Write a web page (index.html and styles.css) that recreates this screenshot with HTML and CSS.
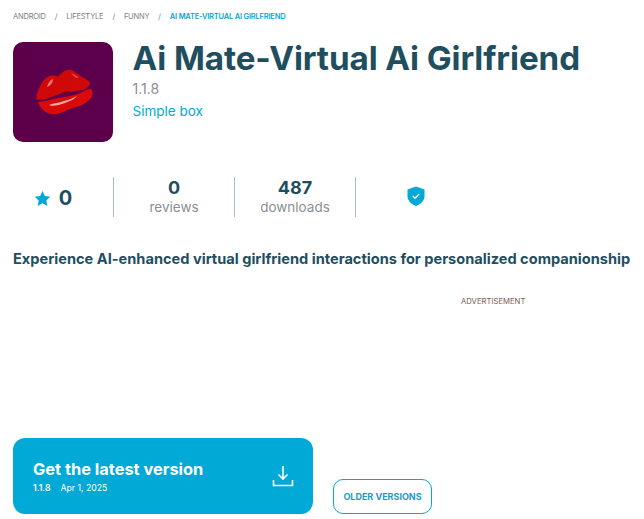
FILE: index.html
```html
<!DOCTYPE html>
<html lang="en">
<head>
  <meta charset="UTF-8" />
  <title>Ai Mate-Virtual Ai Girlfriend</title>
  <meta name="viewport" content="width=device-width, initial-scale=1" />
  <link rel="stylesheet" href="styles.css">
</head>
<body>
  <nav class="crumbs">
    <a>Android</a><span>/</span>
    <a>Lifestyle</a><span>/</span>
    <a>Funny</a><span>/</span>
    <a class="current">Ai Mate-Virtual Ai Girlfriend</a>
  </nav>

  <header class="app-head">
    <div class="app-icon">
      <svg width="100" height="100" viewBox="0 0 100 100">
        <path d="M23 57 C24 50 27 43 31 38 C34 34 40 32 45 35 C48 31 53 27 58 28 C62 29 66 33 69 35 C72 37 76 38 77 41 C76 45 73 47 70 48 C66 48 62 49 58 50 C54 49 50 50 47 52 C42 54 37 55 33 57 C30 58 26 58 23 57 Z" fill="#cf0808"/>
        <path d="M25 60 C32 60 38 57 45 56 C52 55 60 54 67 51 C71 49 75 47 78 47 C80 49 80 53 78 56 C75 60 71 62 67 64 C62 65 58 66 54 68 C49 71 43 73 38 72 C32 71 27 66 25 60 Z" fill="#d80a0a"/>
        <path d="M48 51.500 C51 49.500 54 49 57 50 C54 52 51 52.500 48 51.500 Z" fill="#7a0422"/>
        <path d="M34 45 C35 41 37 38 40 37 C40 41 37 44 34 45 Z" fill="#e97474"/>
        <path d="M36 63 C41 61 46 61 51 59 C56 58 60 56 64 54 C62 57 57 59 52 61 C46 63 40 65 36 63 Z" fill="#f3a6a6"/>
        <path d="M58 31 C62 32 64 34 66 36 C62 36 60 34 58 31 Z" fill="#e04040"/>
      </svg>
    </div>
    <div class="app-info">
      <h1>Ai Mate-Virtual Ai Girlfriend</h1>
      <div class="version">1.1.8</div>
      <a class="dev">Simple box</a>
    </div>
  </header>

  <section class="stats">
    <div class="stat rating">
      <svg width="17" height="17" viewBox="0 0 24 24"><path d="M12 1.500l3.300 7 7.700 1-5.600 5.300 1.400 7.700-6.800-3.700-6.800 3.700 1.400-7.700L1 9.500l7.700-1z" fill="#00a9d6"/></svg>
      <b>0</b>
    </div>
    <div class="stat"><b>0</b><span>reviews</span></div>
    <div class="stat"><b>487</b><span>downloads</span></div>
    <div class="stat safe">
      <svg width="18" height="20" viewBox="0 0 18 20">
        <path d="M9 0.500L17.500 3.500V10C17.500 14.500 14 18 9 20C4 18 .5 14.500 .5 10V3.500Z" fill="#00a9d6"/>
        <path d="M5.800 10L8 12.200L12.200 8" fill="none" stroke="#fff" stroke-width="1.400"/>
      </svg>
    </div>
  </section>

  <p class="tagline">Experience AI-enhanced virtual girlfriend interactions for personalized companionship</p>

  <div class="ad-label">ADVERTISEMENT</div>

  <div class="actions">
    <a class="get-btn">
      <div>
        <div class="get-title">Get the latest version</div>
        <div class="get-meta"><b>1.1.8</b><span>Apr 1, 2025</span></div>
      </div>
      <svg width="22" height="22" viewBox="0 0 22 22" fill="none" stroke="#fff" stroke-width="1.600">
        <path d="M11 1V14M6.500 9.500L11 14L15.500 9.500"/>
        <path d="M1.500 15V20.500H20.500V15"/>
      </svg>
    </a>
    <a class="older-btn">OLDER VERSIONS</a>
  </div>
</body>
</html>
```

FILE: styles.css
```css
body {
  margin: 0;
  padding: 0 0 0 13px;
  background: #fff;
  color: #1f4e5f;
  font-family: 'Inter', 'Liberation Sans', sans-serif;
  overflow: hidden;
}
.crumbs {
  display: flex;
  align-items: center;
  height: 32px;
  font-size: 7.5px;
  letter-spacing: -0.2px;
  text-transform: uppercase;
  color: #7a7f83;
}
.crumbs span {
  margin: 0 9px;
}
.crumbs .current {
  color: #00a9d6;
  font-weight: 600;
}
.app-head {
  display: flex;
  margin-top: 10px;
}
.app-icon {
  width: 100px;
  height: 100px;
  border-radius: 10px;
  background: #5c004c;
  overflow: hidden;
}
.app-info {
  margin-left: 19.5px;
}
h1 {
  margin: -2px 0 0;
  font-size: 33.2px;
  line-height: 36px;
  font-weight: 700;
  letter-spacing: -0.1px;
  white-space: nowrap;
}
.version {
  margin-top: 4px;
  font-size: 14px;
  line-height: 18px;
  color: #8a8f93;
}
.dev {
  display: block;
  margin-top: 4px;
  font-size: 13.5px;
  line-height: 18px;
  color: #00a9d6;
}
.stats {
  display: flex;
  align-items: center;
  margin-top: 35px;
  height: 40px;
}
.stat {
  width: 121px;
  height: 40px;
  display: flex;
  flex-direction: column;
  align-items: center;
  justify-content: center;
  border-right: 1px solid #a3bfca;
  box-sizing: border-box;
  font-size: 13.5px;
  color: #8a8f93;
}
.stat b {
  font-size: 18px;
  line-height: 20px;
  font-weight: 700;
  color: #1f4e5f;
}
.stat span {
  line-height: 19px;
}
.rating {
  width: 101px;
  padding: 2px 20px 0 0;
  flex-direction: row;
  gap: 8px;
}
.rating b {
  font-size: 20px;
}
.safe {
  padding: 0 2px 2px 0;
  border-right: 0;
}
.tagline {
  margin: 33px 0 0;
  font-size: 14.6px;
  line-height: 18px;
  font-weight: 700;
  white-space: nowrap;
}
.ad-label {
  margin: 28px 0 0 448px;
  font-size: 7.7px;
  line-height: 12px;
  color: #7a5a50;
}
.actions {
  display: flex;
  align-items: flex-end;
  gap: 20px;
  margin-top: 130px;
}
.get-btn {
  display: flex;
  align-items: center;
  justify-content: space-between;
  box-sizing: border-box;
  width: 300px;
  height: 76px;
  padding: 0 19px 0 20px;
  border-radius: 12px;
  background: #00a9d6;
  color: #fff;
}
.get-title {
  font-size: 16.4px;
  line-height: 20px;
  font-weight: 700;
}
.get-meta {
  margin-top: 3px;
  font-size: 8.7px;
  line-height: 12px;
}
.get-meta b {
  font-weight: 600;
  margin-right: 10px;
}
.older-btn {
  display: flex;
  align-items: center;
  justify-content: center;
  box-sizing: border-box;
  width: 99px;
  height: 35px;
  border: 1px solid #00a9d6;
  border-radius: 10px;
  font-size: 9px;
  font-weight: 700;
  color: #1b9cc6;
}
```
